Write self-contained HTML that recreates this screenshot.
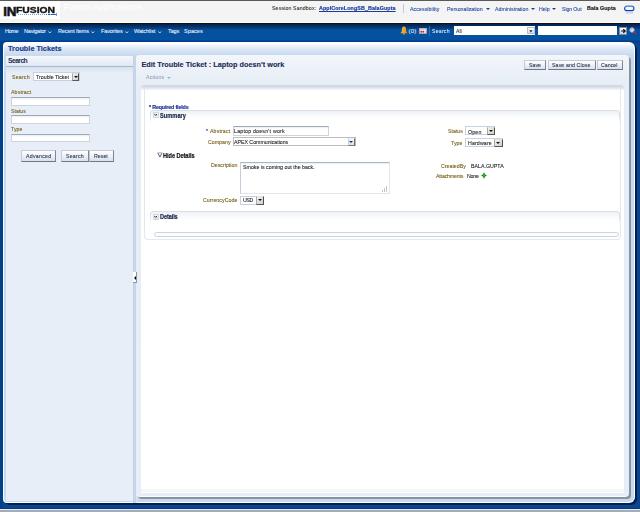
<!DOCTYPE html>
<html><head><meta charset="utf-8">
<style>
*{margin:0;padding:0;box-sizing:border-box}
html,body{width:640px;height:512px;overflow:hidden;background:#0a4690;font-family:"Liberation Sans",sans-serif}
.a{position:absolute}
.t{position:absolute;white-space:nowrap;line-height:1;font-size:6.2px;letter-spacing:0;transform:scaleX(.85);transform-origin:0 0;-webkit-text-stroke:0.1px currentColor}
.b{-webkit-text-stroke:0;transform:none}
.nv{transform:none}
.bs{transform:scaleX(.86);-webkit-text-stroke:0.2px currentColor}
.b{font-weight:bold}
#hdr{left:0;top:0;width:640px;height:24px;background:#f4f4f4;border-top:1px solid #5a5a5a}
#nav{left:0;top:24px;width:640px;height:18px;background:linear-gradient(#02214d 0,#083c7a 4px,#0551a0 6px,#0551a0 16px,#003d8f 17px,#003d8f 18px)}
.hl{color:#2848a0;letter-spacing:-0.45px}
.nv{color:#e4ecf8;font-size:5.5px;letter-spacing:-0.1px}
.arr{position:absolute;width:0;height:0;border-left:2px solid transparent;border-right:2px solid transparent;border-top:2px solid #c8daf2}
.lab{color:#76601a}
.inp{position:absolute;background:linear-gradient(#e9edf2 0,#fff 2px);border:1px solid #cdd4de;border-top-color:#9ea8b6}
.ddb{position:absolute;background:linear-gradient(135deg,#f4f2ee,#d2cec8);border-top:1px solid #e4e4e4;border-left:1px solid #a8a8a8;border-right:1px solid #4e4e4e;border-bottom:1px solid #5a5a5a}
.ddb:after{content:"";position:absolute;left:50%;top:50%;margin-left:-2px;margin-top:-1px;border-left:2px solid transparent;border-right:2px solid transparent;border-top:2.2px solid #111}
.sel{background:#fff;border-color:#c6d2e2}
.ddc{background:linear-gradient(#f6f8fb,#d8e0ea);border-top-color:#f0f0f0;border-left-color:#c8d0da;border-right-color:#6e6e6e;border-bottom-color:#7a7a7a}
.ddc:after{border-top-color:#17376a}
.btn{position:absolute;background:linear-gradient(#ffffff,#e9eef4 60%,#d9e0ea);border:1px solid #c4ccd6;border-right-color:#7d8794;border-bottom-color:#6f7986;}
</style></head><body>
<!-- header -->
<div id="hdr" class="a"></div>
<div class="a" style="left:0;top:1px;width:60px;height:18px;background:#fff"></div>
<div class="t b" style="left:3.3px;top:4.7px;font-size:13.4px;letter-spacing:-0.3px;color:#151515;-webkit-text-stroke:0.6px #151515">IN</div>
<div class="t b" style="left:15.9px;top:5.7px;font-size:8.6px;letter-spacing:0;color:#151515;transform:scaleX(1.2);transform-origin:0 0;-webkit-text-stroke:0.35px #151515">FUSION</div>
<div class="a" style="left:18px;top:14px;width:38px;height:1px;background:repeating-linear-gradient(90deg,#6f94d8 0,#6f94d8 1px,transparent 1px,transparent 2px);opacity:.9"></div>
<div class="a" style="left:46px;top:14px;width:10px;height:1px;background:repeating-linear-gradient(90deg,#2f5fb8 0,#2f5fb8 1px,transparent 1px,transparent 1.5px)"></div>
<div class="a" style="left:56px;top:12.5px;width:1px;height:3.5px;background:#4a80d8;opacity:.8"></div>
<div class="t" style="left:63.5px;top:3.2px;font-size:8.6px;color:#fff;transform:none;letter-spacing:0.25px">Fusion Applications</div>
<div class="a" style="left:0;top:22px;width:640px;height:1px;background:#fbfbfb"></div>
<div class="a" style="left:0;top:23px;width:640px;height:1px;background:#111"></div>

<div class="t" style="left:272px;top:5.3px;color:#333;letter-spacing:0.134px">Session Sandbox:</div>
<div class="t b bs" style="left:319px;top:4.9px;color:#1d3d9c;text-decoration:underline;letter-spacing:0.132px">AppICoreLongSB_BalaGupta</div>
<div class="a" style="left:403px;top:4px;width:1px;height:9px;background:#c0c8d4"></div>
<div class="t hl" style="left:410px;top:5.6px;letter-spacing:0.079px">Accessibility</div>
<div class="t hl" style="left:447px;top:5.6px;letter-spacing:-0.034px">Personalization</div>
<div class="arr" style="left:485.5px;top:8px;border-top-color:#203a8c"></div>
<div class="t hl" style="left:494.5px;top:5.6px;letter-spacing:-0.001px">Administration</div>
<div class="arr" style="left:531px;top:8px;border-top-color:#203a8c"></div>
<div class="t hl" style="left:539px;top:5.6px;letter-spacing:-0.097px">Help</div>
<div class="arr" style="left:552px;top:8px;border-top-color:#203a8c"></div>
<div class="t hl" style="left:561.9px;top:5.6px;letter-spacing:-0.145px">Sign Out</div>
<div class="t b bs" style="left:587px;top:4.84px;color:#222;letter-spacing:0.079px">Bala Gupta</div>
<svg class="a" style="left:623px;top:4px" width="13" height="11" viewBox="0 0 13 11"><defs><linearGradient id="og" x1="0" y1="0" x2="0" y2="1"><stop offset="0" stop-color="#3a78e0"/><stop offset="1" stop-color="#0c3ea8"/></linearGradient></defs><rect x="1.6" y="2.2" width="9.3" height="4.4" rx="2.2" fill="none" stroke="url(#og)" stroke-width="1.3"/><rect x="2.6" y="8.3" width="7.8" height="1.4" rx="0.7" fill="#b8ccec" opacity=".8"/></svg>

<!-- nav -->
<div id="nav" class="a"></div>
<div class="t nv" style="left:5px;top:29px;letter-spacing:-0.4px">Home</div>
<div class="t nv" style="left:24px;top:29px;letter-spacing:-0.201px">Navigator</div>
<svg class="a" style="left:48.0px;top:30.6px" width="4" height="3"><path d="M0.5 0.5 L1.8 2 L3.1 0.5" stroke="#dfe8f6" fill="none" stroke-width="0.9"/></svg>
<div class="t nv" style="left:58.0px;top:29px;letter-spacing:-0.132px">Recent Items</div>
<svg class="a" style="left:91.0px;top:30.6px" width="4" height="3"><path d="M0.5 0.5 L1.8 2 L3.1 0.5" stroke="#dfe8f6" fill="none" stroke-width="0.9"/></svg>
<div class="t nv" style="left:101px;top:29px;letter-spacing:-0.1px">Favorites</div>
<svg class="a" style="left:125.0px;top:30.6px" width="4" height="3"><path d="M0.5 0.5 L1.8 2 L3.1 0.5" stroke="#dfe8f6" fill="none" stroke-width="0.9"/></svg>
<div class="t nv" style="left:134px;top:29px">Watchlist</div>
<svg class="a" style="left:158.0px;top:30.6px" width="4" height="3"><path d="M0.5 0.5 L1.8 2 L3.1 0.5" stroke="#dfe8f6" fill="none" stroke-width="0.9"/></svg>
<div class="t nv" style="left:168px;top:29px">Tags</div>
<div class="t nv" style="left:184px;top:29px;letter-spacing:0.08px">Spaces</div>

<!-- nav right -->
<svg class="a" style="left:400px;top:26px" width="8" height="9" viewBox="0 0 8 9"><defs><linearGradient id="bell" x1="0" x2="1"><stop offset="0" stop-color="#f7c23a"/><stop offset="1" stop-color="#d98a10"/></linearGradient></defs><path d="M4 0.6 C2.2 0.6 1.9 2.2 1.9 3.6 L1.7 5.8 L0.4 7.2 L7.6 7.2 L6.3 5.8 L6.1 3.6 C6.1 2.2 5.8 0.6 4 0.6Z" fill="url(#bell)"/><circle cx="4" cy="7.9" r="0.9" fill="#e0a020"/></svg>
<div class="t" style="left:408.6px;top:28.4px;font-size:6px;color:#dce8f8;transform:none;letter-spacing:0.1px">(0)</div>
<svg class="a" style="left:418.5px;top:27.5px" width="8" height="6" viewBox="0 0 8 6"><rect x="0.3" y="0.3" width="7.4" height="5.4" fill="#f4f4f4" stroke="#8a96a8" stroke-width="0.6"/><rect x="0.6" y="0.6" width="6.8" height="1.2" fill="#c8d4e8"/><rect x="1.4" y="2.8" width="1.6" height="1.8" fill="#e01818"/><rect x="3.4" y="2.8" width="1.6" height="1.8" fill="#e01818"/><rect x="5.4" y="2.8" width="1.2" height="1.8" fill="#b8c0cc"/></svg>
<div class="a" style="left:429px;top:26px;width:1px;height:10px;background:#3f6aa6"></div>
<div class="t" style="left:432px;top:28px;font-size:6px;color:#e8f0fa;-webkit-text-stroke:0.05px #e8f0fa;letter-spacing:0.318px">Search</div>
<div class="a" style="left:453.5px;top:26px;width:81.5px;height:9px;background:#fff"></div>
<div class="t" style="left:455.8px;top:27.7px;font-size:6px;color:#333">All</div>
<div class="a" style="left:527px;top:27.3px;width:7.5px;height:7px;background:linear-gradient(#fdfdfd,#d8dde6);border:1px solid #b8bec8"></div>
<svg class="a" style="left:529px;top:29.5px" width="4" height="3"><path d="M0.2 0.3 L3.6 0.3 L1.9 2.4Z" fill="#1a2a4a"/></svg>
<div class="a" style="left:538.4px;top:26px;width:79px;height:9px;background:#fff"></div>
<div class="a" style="left:618.5px;top:26.5px;width:8.5px;height:8px;background:linear-gradient(#ffffff,#cfd6e0);border:1px solid #7f8a9c"></div>
<svg class="a" style="left:619.5px;top:27.5px" width="7" height="6" viewBox="0 0 7 6"><path d="M1 3 L5 3 M3.3 1.2 L5.2 3 L3.3 4.8" stroke="#111" stroke-width="1.2" fill="none"/></svg>
<svg class="a" style="left:628.5px;top:26.8px" width="8" height="8" viewBox="0 0 8 8"><circle cx="3" cy="3" r="2.2" fill="#dfe8f4" stroke="#9eb0c8" stroke-width="0.9"/><path d="M4.5 4.5 L7 7" stroke="#d02020" stroke-width="1.4"/><path d="M1.8 2.2 L3.6 2.2" stroke="#6080b0" stroke-width="0.6"/></svg>

<!-- outer panel -->
<div class="a" style="left:0;top:42px;width:3px;height:467px;background:#00418a"></div>
<div class="a" style="left:0;top:508px;width:640px;height:1px;background:#003a8a"></div>
<div class="a" style="left:0;top:509px;width:640px;height:3px;background:linear-gradient(#f2eaea 0,#f2eaea 0.6px,#a4acba 1px)"></div>
<div class="a" style="left:4px;top:44px;width:632.5px;height:461px;background:#00204e;border-radius:0 6px 6px 6px"></div>
<div class="a" style="left:3px;top:42px;width:632px;height:461px;background:#fff;border-radius:4px 6px 6px 4px"></div>
<div class="a" style="left:4px;top:43px;width:630px;height:459px;background:linear-gradient(#ffffff 0,#dbe6f5 6px,#c9daf0 12px);border-radius:3px 5px 5px 3px"></div>
<div class="t b" style="left:8px;top:45.0px;font-size:7.3px;letter-spacing:0.014px;color:#153a8a;-webkit-text-stroke:0.15px #153a8a">Trouble Tickets</div>

<!-- left search panel -->
<div class="a" style="left:6px;top:56px;width:127px;height:445px;background:#e8eef7"></div>
<div class="a" style="left:6px;top:56px;width:127px;height:11px;background:linear-gradient(#f6f9fd,#dfe8f4);border-bottom:1px solid #a9b9cd;border-radius:3px 3px 0 0"></div>
<div class="a" style="left:6px;top:67px;width:127px;height:6px;background:linear-gradient(#d6e2f0,#e8eef7)"></div>
<div class="t b" style="left:8.0px;top:58.0px;font-size:6.8px;letter-spacing:-0.58px;color:#1d2f55">Search</div>

<div class="t lab" style="left:12px;top:73.8px;letter-spacing:0.209px">Search</div>
<div class="inp sel" style="left:33.3px;top:72.3px;width:46.5px;height:8.7px"></div>
<div class="t" style="left:35.5px;top:73.94px;color:#222;letter-spacing:0.003px">Trouble Ticket</div>
<div class="ddb" style="left:71.7px;top:73.2px;width:7.8px;height:7.4px"></div>

<div class="t lab" style="left:11px;top:89.3px;letter-spacing:0.136px">Abstract</div>
<div class="inp" style="left:11px;top:97px;width:79px;height:8.5px"></div>
<div class="t lab" style="left:11px;top:107.5px">Status</div>
<div class="inp" style="left:11px;top:115.3px;width:79px;height:8.5px"></div>
<div class="t lab" style="left:11px;top:125.6px;letter-spacing:-0.006px">Type</div>
<div class="inp" style="left:11px;top:133.5px;width:79px;height:8.5px"></div>

<div class="btn" style="left:21px;top:150px;width:35px;height:11.5px"></div>
<div class="t" style="left:25.6px;top:152.6px;color:#2a3550;letter-spacing:0.302px">Advanced</div>
<div class="btn" style="left:60.5px;top:150px;width:28px;height:11.5px"></div>
<div class="t" style="left:65.65px;top:152.6px;color:#2a3550;letter-spacing:0.253px">Search</div>
<div class="btn" style="left:89.4px;top:150px;width:24.5px;height:11.5px"></div>
<div class="t" style="left:94.04px;top:152.6px;color:#2a3550;letter-spacing:0.025px">Reset</div>

<!-- splitter -->
<div class="a" style="left:133px;top:55px;width:4px;height:448px;background:linear-gradient(90deg,#c8ced8 0,#c4d6ec 1px,#c4d6ec 2.5px,#dce6f2 3px)"></div>

<!-- content panel -->
<div class="a" style="left:137.5px;top:57px;width:493.5px;height:441.5px;background:#8693a0;border-radius:4px"></div>
<div class="a" style="left:136px;top:55px;width:492.6px;height:442px;border-bottom:1px solid #fafcff;background:linear-gradient(#f3f6fa 0,#e6edf6 30px,#e8eef7 100%);border-radius:4px"></div>
<div class="t b" style="left:141.5px;top:61.4px;font-size:7.3px;letter-spacing:0.002px;color:#1a2c58;-webkit-text-stroke:0.12px #1a2c58">Edit Trouble Ticket : Laptop doesn't work</div>
<div class="t" style="left:146.3px;top:74.37px;color:#9aa4b0;letter-spacing:0.176px">Actions</div>
<div class="arr" style="left:167px;top:77.3px;border-top-color:#a8b2be"></div>

<div class="btn" style="left:524px;top:60px;width:22px;height:10px"></div>
<div class="t" style="left:528.7px;top:61.58px;color:#2a3550">Save</div>
<div class="btn" style="left:548px;top:60px;width:47.5px;height:10px"></div>
<div class="t" style="left:551.6px;top:61.58px;color:#2a3550;letter-spacing:0.122px">Save and Close</div>
<div class="btn" style="left:596.5px;top:60px;width:26.3px;height:10px"></div>
<div class="t" style="left:600.7px;top:61.58px;color:#2a3550">Cancel</div>

<!-- inner white -->
<div class="a" style="left:141px;top:85px;width:483px;height:408px;background:#fff;border-radius:3px 3px 0 0"></div>
<div class="a" style="left:141px;top:85px;width:483px;height:5px;background:linear-gradient(#d0d7e3 0,#d6dce7 2px,#e9edf3 4px,#fafbfc 5px);border-radius:3px 3px 0 0"></div>
<div class="a" style="left:141px;top:489px;width:483px;height:2.5px;background:#f5f6f7"></div>
<div class="a" style="left:144px;top:89px;width:477px;height:151px;border:1px solid #e3e8ee;border-top:none;border-radius:0 0 4px 4px"></div>
<div class="t b bs" style="left:149px;top:103.6px;font-size:6.2px;color:#1c2e9a;letter-spacing:-0.17px">* Required fields</div>

<!-- summary box -->
<div class="a" style="left:149.5px;top:109.5px;width:470px;height:14px;border:1px solid #d9dfe7;border-bottom:none;border-radius:3px 3px 0 0;background:linear-gradient(#eef1f5 0,#f7f9fb 4px,#fff 10px);-webkit-mask-image:linear-gradient(#000 40%,transparent)"></div>
<svg class="a" style="left:152.8px;top:112.2px" width="6" height="6" viewBox="0 0 6 6"><defs><linearGradient id="ig1" x1="0" y1="0" x2="0" y2="1"><stop offset="0" stop-color="#ffffff"/><stop offset="1" stop-color="#e2e8f0"/></linearGradient></defs><rect x="0.4" y="0.4" width="5.2" height="5.2" rx="0.6" fill="url(#ig1)" stroke="#bcc6d4" stroke-width="0.7"/><path d="M1.4 2.1 L2.7 3.4 L4.1 2.0" stroke="#111" stroke-width="0.95" fill="none"/></svg>
<div class="t b bs" style="left:159.7px;top:113.3px;font-size:6.5px;color:#17264c;letter-spacing:0.087px">Summary</div>

<div class="t" style="left:206px;top:128px;color:#1d3d9c">*</div>
<div class="t lab" style="left:210px;top:128.0px;letter-spacing:0.136px">Abstract</div>
<div class="inp" style="left:233px;top:126px;width:96px;height:9.6px"></div>
<div class="t" style="left:234.1px;top:128.0px;color:#222;letter-spacing:0.241px">Laptop doesn't work</div>
<div class="t lab" style="left:208px;top:138.86px">Company</div>
<div class="inp sel" style="left:233px;top:137.3px;width:122.5px;height:9.1px;border-color:#bcbcbc"></div>
<div class="t" style="left:234.1px;top:138.86px;color:#222;letter-spacing:-0.029px">APEX Communications</div>
<div class="ddb ddc" style="left:348px;top:138.2px;width:6.6px;height:7.4px"></div>

<svg class="a" style="left:156.6px;top:151.8px" width="6" height="6" viewBox="0 0 6 6"><path d="M0.7 0.9 L2.9 5.1 L5.1 0.9" fill="#eef2f8" stroke="#3c4e78" stroke-width="0.85" stroke-linejoin="round"/><path d="M0.5 0.8 L5.3 0.8" stroke="#a4b4cc" stroke-width="0.9"/></svg>
<div class="t b bs" style="left:163px;top:152.7px;font-size:6.5px;color:#121418;letter-spacing:-0.048px">Hide Details</div>

<div class="t lab" style="left:210.72px;top:162.44px">Description</div>
<div class="inp" style="left:240px;top:162.2px;width:150px;height:31.4px;border-color:#a9b5c6 #e0e6ea #e0e6ea #c4cedb"></div>
<div class="t" style="left:242.9px;top:164.0px;color:#222">Smoke is coming out the back.</div>
<div class="a" style="left:382px;top:190px;width:1px;height:2px;background:#c4c4c4"></div><div class="a" style="left:384px;top:188px;width:1px;height:4px;background:#c4c4c4"></div><div class="a" style="left:386px;top:186px;width:1px;height:6px;background:#c4c4c4"></div>

<div class="t lab" style="left:203.0px;top:197.3px;letter-spacing:0.045px">CurrencyCode</div>
<div class="inp sel" style="left:240px;top:196px;width:24px;height:8.8px"></div>
<div class="t" style="left:242.9px;top:197.3px;color:#222;letter-spacing:-0.53px">USD</div>
<div class="ddb" style="left:256px;top:196.3px;width:7.8px;height:8.3px"></div>

<div class="t lab" style="left:447.72px;top:128.3px;letter-spacing:-0.003px">Status</div>
<div class="inp sel" style="left:465.1px;top:126.3px;width:29.7px;height:8.6px"></div>
<div class="t" style="left:467.72px;top:128.7px;color:#222;letter-spacing:0.172px">Open</div>
<div class="ddb" style="left:486.6px;top:126.8px;width:8.2px;height:7.9px"></div>
<div class="t lab" style="left:451px;top:140.3px">Type</div>
<div class="inp sel" style="left:465.1px;top:138px;width:37.5px;height:9px"></div>
<div class="t" style="left:467.72px;top:140.14px;color:#222;letter-spacing:0.149px">Hardware</div>
<div class="ddb" style="left:494.4px;top:138.5px;width:8.2px;height:8.3px"></div>

<div class="t lab" style="left:440.72px;top:162.93px;letter-spacing:-0.006px">CreatedBy</div>
<div class="t" style="left:471px;top:162.93px;color:#222;letter-spacing:0.006px">BALA.GUPTA</div>
<div class="t lab" style="left:436px;top:172.7px;letter-spacing:-0.212px">Attachments</div>
<div class="t" style="left:467.36px;top:172.7px;color:#222;letter-spacing:-0.247px">None</div>
<svg class="a" style="left:481.4px;top:171.6px" width="6" height="7" viewBox="0 0 6 7"><path d="M3 0.2 L4.1 2.5 L5.9 3.5 L4.1 4.5 L3 6.8 L1.9 4.5 L0.1 3.5 L1.9 2.5 Z" fill="#067a06"/><path d="M3 1.3 L3.7 3.5 L3 5.7 L2.3 3.5Z" fill="#2cf02c"/></svg>

<!-- details -->
<div class="a" style="left:149.5px;top:211px;width:470px;height:13px;border:1px solid #d9dfe7;border-bottom:none;border-radius:3px 3px 0 0;background:linear-gradient(#eef1f5 0,#f7f9fb 4px,#fff 10px);-webkit-mask-image:linear-gradient(#000 40%,transparent)"></div>
<svg class="a" style="left:152.8px;top:213.8px" width="6" height="6" viewBox="0 0 6 6"><defs><linearGradient id="ig2" x1="0" y1="0" x2="0" y2="1"><stop offset="0" stop-color="#ffffff"/><stop offset="1" stop-color="#d4dce8"/></linearGradient></defs><rect x="0.4" y="0.4" width="5.2" height="5.2" rx="0.6" fill="url(#ig2)" stroke="#bcc6d4" stroke-width="0.7"/><path d="M1.4 2.1 L2.7 3.4 L4.1 2.0" stroke="#111" stroke-width="0.95" fill="none"/></svg>
<div class="t b bs" style="left:159.7px;top:214.4px;font-size:6.5px;color:#17264c;letter-spacing:-0.124px">Details</div>
<div class="a" style="left:154px;top:232px;width:465px;height:5px;border:1px solid #cbd4e0;border-radius:3px;background:#f9fbfd"></div>

<div class="a" style="left:133.3px;top:272px;width:3.7px;height:11.4px;background:#fff;border-right:1px solid #8c96a4;border-bottom:1px solid #8c96a4"></div>
<div class="a" style="left:133.8px;top:275.6px;width:0;height:0;border-top:2px solid transparent;border-bottom:2px solid transparent;border-right:2.4px solid #000"></div>
</body></html>
